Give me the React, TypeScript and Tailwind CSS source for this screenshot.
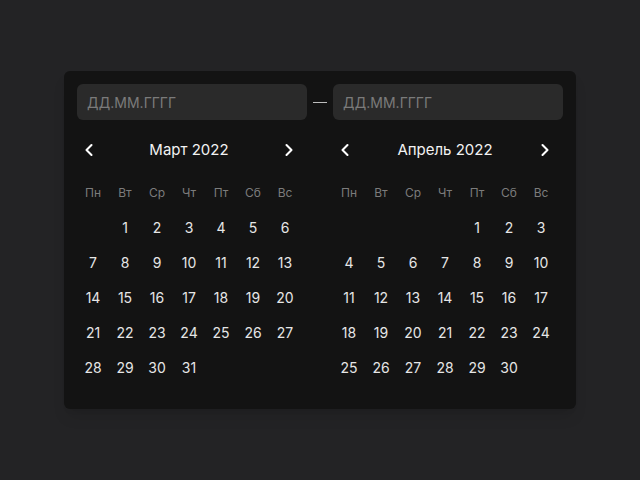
import { ChevronLeft, ChevronRight } from "lucide-react";

const weekdays = ["Пн", "Вт", "Ср", "Чт", "Пт", "Сб", "Вс"];

type Month = { title: string; offset: number; days: number };

const months: Month[] = [
  { title: "Март 2022", offset: 1, days: 31 },
  { title: "Апрель 2022", offset: 4, days: 30 },
];

function DateInput() {
  return (
    <input
      type="text"
      placeholder="ДД.ММ.ГГГГ"
      className="h-9 w-[230px] rounded-md bg-[#2a2a2a] px-2.5 text-sm text-[#e5e5e5] placeholder:text-[#7b7b7b] outline-none"
    />
  );
}

function MonthGrid({ month }: { month: Month }) {
  const cells: (number | null)[] = [
    ...Array.from({ length: month.offset }, () => null),
    ...Array.from({ length: month.days }, (_, i) => i + 1),
  ];

  return (
    <div className="w-[224px]">
      {/* Header */}
      <div className="mt-3.5 flex h-8 items-center justify-between">
        <button className="flex h-8 w-6 items-center justify-center text-white">
          <ChevronLeft size={20} strokeWidth={2.5} />
        </button>
        <span className="text-[15px] text-[#f2f2f2]">{month.title}</span>
        <button className="flex h-8 w-6 items-center justify-center text-white">
          <ChevronRight size={20} strokeWidth={2.5} />
        </button>
      </div>

      {/* Weekdays */}
      <div className="mt-[9px] grid grid-cols-7">
        {weekdays.map((d) => (
          <div key={d} className="flex h-[35px] items-center justify-center text-xs text-[#7c7c7c]">
            {d}
          </div>
        ))}
      </div>

      {/* Days */}
      <div className="grid grid-cols-7">
        {cells.map((d, i) => (
          <div key={i} className="flex h-[35px] items-center justify-center text-sm text-[#e6e6e6]">
            {d}
          </div>
        ))}
      </div>
    </div>
  );
}

export default function App() {
  return (
    <div
      className="flex min-h-screen items-center justify-center bg-[#232325]"
      style={{ fontFamily: "Inter, 'Noto Sans', sans-serif" }}
    >
      <div className="w-[512px] rounded-md bg-[#131313] px-[13px] pb-6 pt-[13px] shadow-lg">
        <div className="flex items-center justify-between">
          <DateInput />
          <div className="h-px w-[14px] bg-[#bdbdbd]" />
          <DateInput />
        </div>
        <div className="flex gap-8">
          {months.map((m) => (
            <MonthGrid key={m.title} month={m} />
          ))}
        </div>
      </div>
    </div>
  );
}
